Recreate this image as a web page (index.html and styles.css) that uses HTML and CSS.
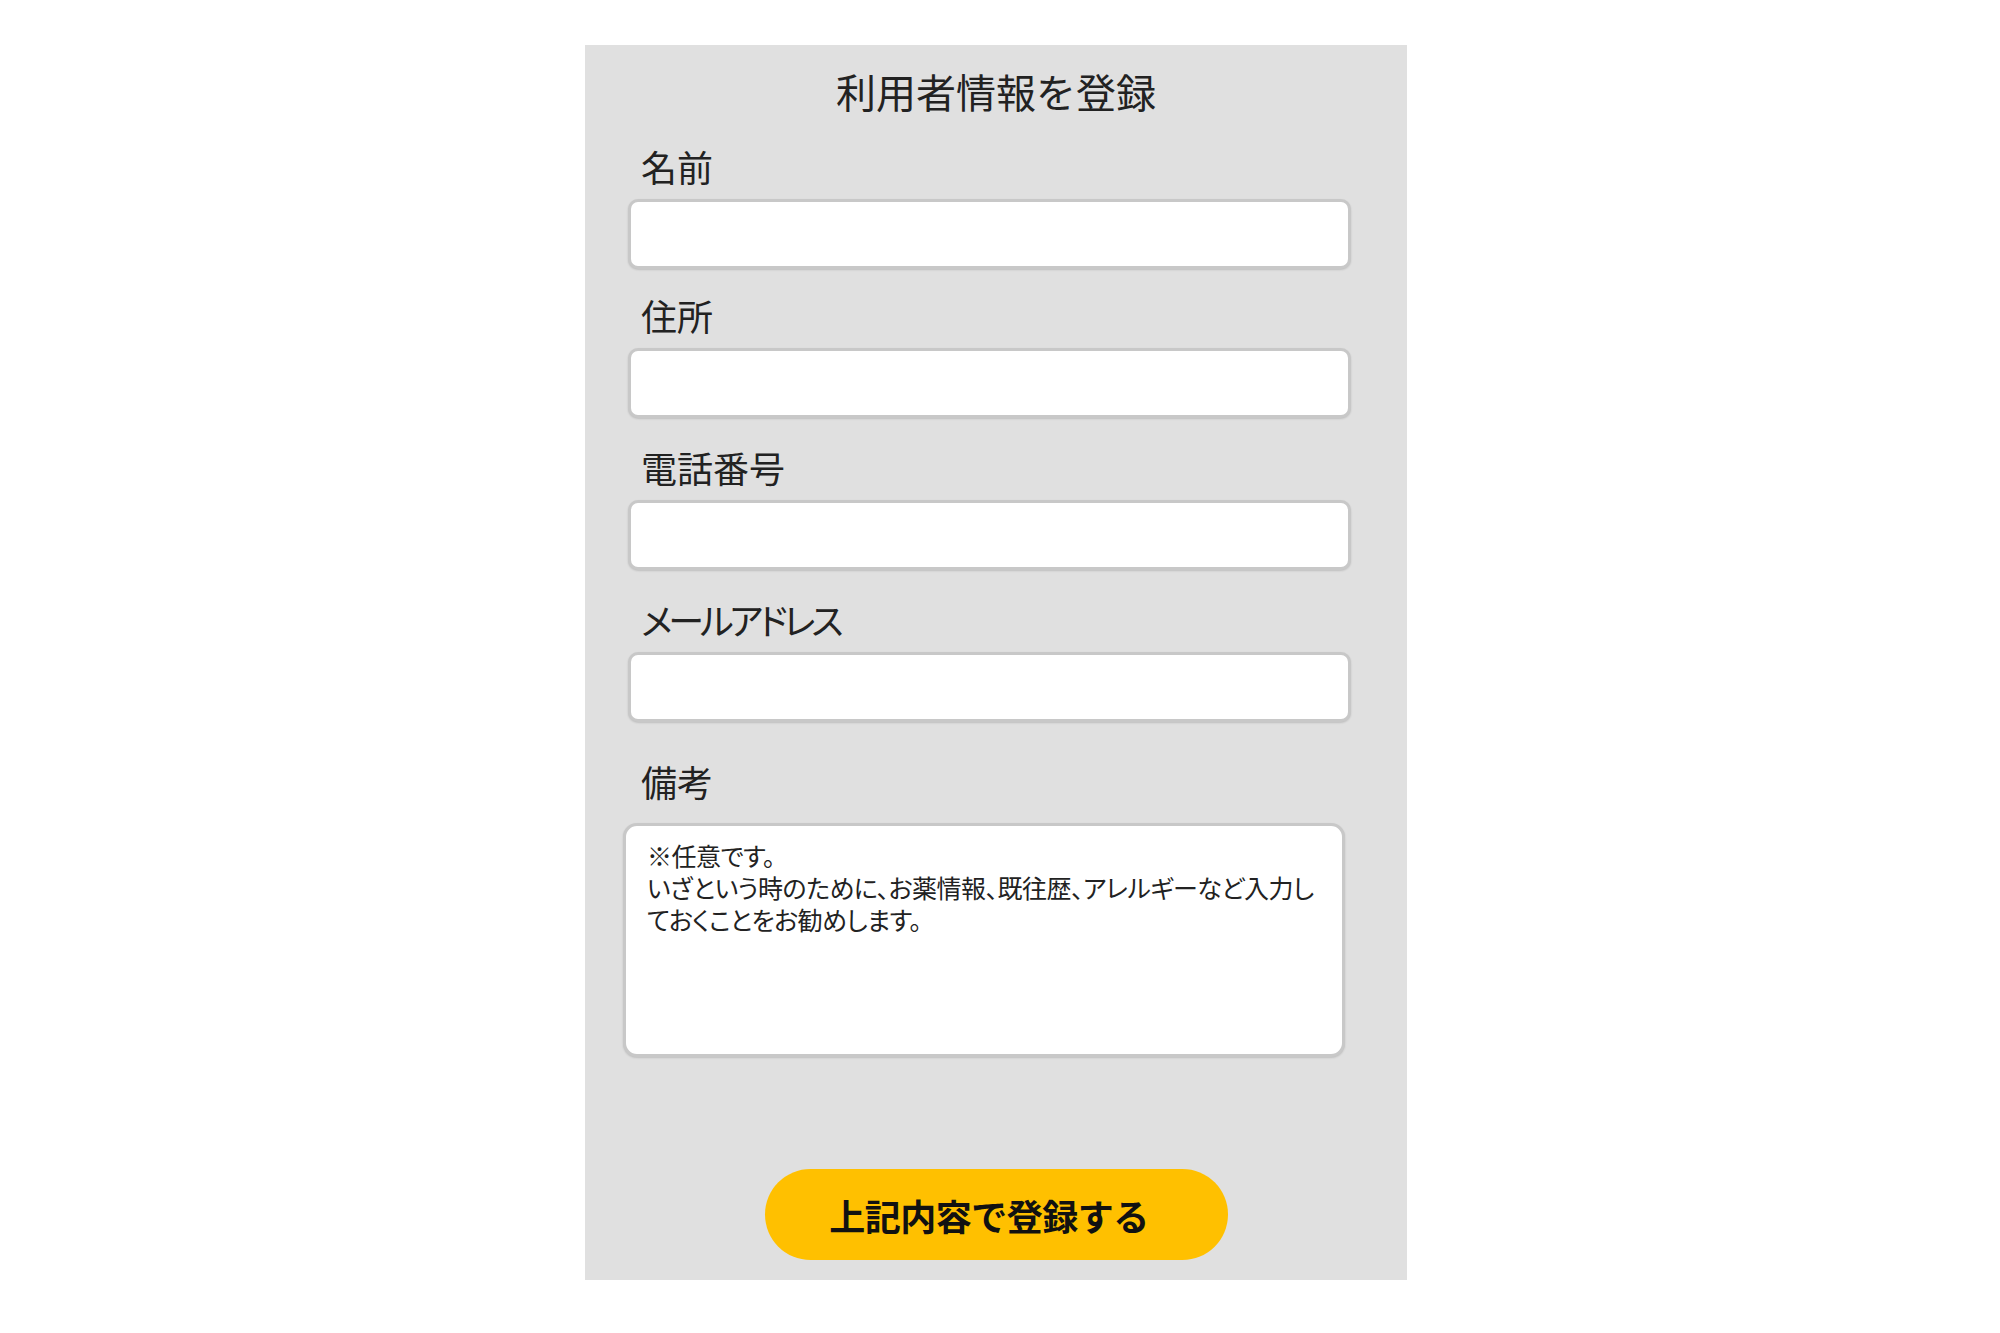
FILE: index.html
```html
<!DOCTYPE html>
<html>
 <head>
  <meta charset="utf-8">
  <title>利用者情報を登録</title>
  <link rel="stylesheet" href="styles.css">
 </head>

 <body>
  <div class="panel">
   <h1 class="title">利用者情報を登録</h1>

   <div class="form">
    <div class="field">
     <label class="label" for="name">名前</label>
     <input id="name" class="box" type="text">
    </div>
    <div class="field">
     <label class="label" for="address">住所</label>
     <input id="address" class="box" type="text">
    </div>
    <div class="field">
     <label class="label" for="tel">電話番号</label>
     <input id="tel" class="box" type="tel">
    </div>
    <div class="field">
     <label class="label kana" for="mail">メールアドレス</label>
     <input id="mail" class="box" type="email">
    </div>
    <div class="field note">
     <label class="label" for="memo">備考</label>
     <textarea id="memo" class="memo" wrap="off">※任意です。
いざという時のために、お薬情報、既往歴、アレルギーなど入力し
ておくことをお勧めします。</textarea>
    </div>
   </div>

   <div class="submit_row">
    <button class="submit">上記内容で登録する</button>
   </div>
  </div>
 </body>
</html>
```

FILE: styles.css
```css
body {
  margin:0;
  padding-right:8px;
  background-color:#ffffff;
  font-family:"Noto Sans CJK JP", "Noto Sans", sans-serif;
  color:#222222;
}

.panel {
  width:822px;
  margin:45px auto 0;
  padding:20px 0 20px;
  box-sizing:border-box;
  background-color:#e0e0e0;
}

.title {
  margin:0 0 27px;
  font-size:40px;
  line-height:52px;
  font-weight:normal;
  text-align:center;
}

.form {
  padding-left:43px;
}

.field {
  margin-bottom:27px;
}

.field:first-child {
  margin-bottom:24px;
}

.label {
  display:block;
  padding-left:13px;
  margin-bottom:11px;
  font-size:36px;
  line-height:44px;
  font-feature-settings:"palt";
}

.kana {
  letter-spacing:-4px;
}

.box {
  display:block;
  width:723px;
  height:70px;
  box-sizing:border-box;
  border:3px solid #c8c8c8;
  border-radius:10px;
  background-color:#ffffff;
  box-shadow:0 1px 2px rgba(0,0,0,0.15);
  outline:none;
}

.note {
  margin-top:37px;
  margin-bottom:0;
}

.note .label {
  margin-bottom:20px;
}

.memo {
  display:block;
  width:722px;
  height:234px;
  margin-left:-5px;
  box-sizing:border-box;
  padding:13px 6px 0 21px;
  border:3px solid #c8c8c8;
  border-radius:14px;
  background-color:#ffffff;
  box-shadow:0 1px 2px rgba(0,0,0,0.15);
  font-family:"Noto Sans CJK JP", "Noto Sans", sans-serif;
  font-size:25px;
  font-feature-settings:"palt";
  letter-spacing:-0.5px;
  line-height:32px;
  color:#222222;
  resize:none;
  overflow:hidden;
  outline:none;
}

.submit_row {
  margin-top:112px;
  text-align:center;
}

.submit {
  width:463px;
  height:91px;
  padding:0 14px 0 0;
  border-style:none;
  border-radius:46px;
  background-color:#ffc000;
  font-family:"Noto Sans CJK JP", "Noto Sans", sans-serif;
  font-size:36px;
  font-weight:bold;
  letter-spacing:-0.5px;
  color:#111111;
}
```
